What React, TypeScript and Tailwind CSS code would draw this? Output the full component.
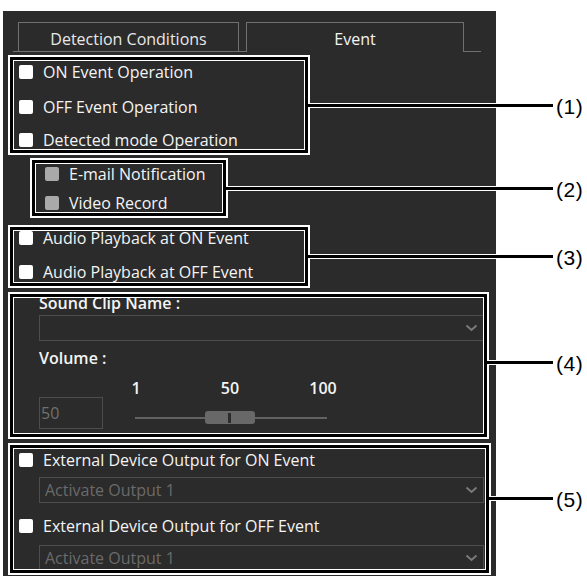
import type { ReactNode } from "react";
import clsx from "clsx";

function Check({ muted }: { muted?: boolean }) {
  return <span className={clsx("size-[14px] shrink-0 rounded-[2px]", muted ? "bg-[#a9a9a9]" : "bg-white")} />;
}

function CheckRow({ label, muted, className }: { label: string; muted?: boolean; className?: string }) {
  return (
    <div className={clsx("flex h-5 items-center gap-[10px] whitespace-nowrap", className)}>
      <Check muted={muted} />
      <span>{label}</span>
    </div>
  );
}

function Chevron() {
  return (
    <svg width="13" height="8" viewBox="0 0 13 8" className="shrink-0">
      <polyline points="1.5,1.5 6.5,6 11.5,1.5" fill="none" stroke="#7a7a7a" strokeWidth="2" />
    </svg>
  );
}

function Select({ value, className }: { value?: string; className?: string }) {
  return (
    <div
      className={clsx(
        "flex h-[26px] w-[445px] items-center justify-between border border-[#4d4d4d] pl-[5px] pr-[5px] text-[#6a6a6a]",
        className,
      )}
    >
      <span>{value}</span>
      <Chevron />
    </div>
  );
}

function Frame({
  n,
  className,
  lineClass,
  children,
}: {
  n: number;
  className: string;
  lineClass: string;
  children: ReactNode;
}) {
  return (
    <div className={clsx("relative border-[3px] border-black shadow-[0_0_0_2px_#fff]", className)}>
      <div className="h-full overflow-hidden border border-white">{children}</div>
      <div
        className={clsx(
          "absolute left-[calc(100%+3px)] z-10 h-[3px] bg-black shadow-[0_1px_0_#fff,0_-1px_0_#fff]",
          lineClass,
        )}
      >
        <span className="absolute left-full top-1/2 ml-[3px] -translate-y-1/2 font-['Liberation_Sans',Arial,sans-serif] text-[21px] leading-none tracking-[0.5px] text-black">
          ({n})
        </span>
      </div>
    </div>
  );
}

export default function App() {
  return (
    <div className="relative h-[576px] w-[587px] overflow-hidden bg-white font-['Open_Sans',sans-serif] text-[16px] font-medium text-[#f4f4f4]">
      <div className="ml-[3px] mt-[11px] h-[565px] w-[493px] bg-[#2b2b2b] pt-[11px]">
        {/* tabs */}
        <div className="ml-[10px] flex h-[30px] items-end">
          <div className="w-[5px] border-b border-[#707070]" />
          <div className="flex h-[30px] w-[221px] justify-center border border-[#707070] pt-[6px] leading-5 text-[#e8e8e8]">
            Detection Conditions
          </div>
          <div className="w-[7px] border-b border-[#707070]" />
          <div className="flex h-[30px] w-[218px] justify-center border-x border-t border-[#707070] pt-[6px] leading-5">
            Event
          </div>
          <div className="w-[17px] border-b border-[#707070]" />
        </div>

        <Frame n={1} className="ml-[7px] mt-[5px] h-[96px] w-[298px]" lineClass="top-[44px] w-[245px]">
          <div className="flex flex-col pl-[5px] pt-[1px]">
            <CheckRow label="ON Event Operation" />
            <CheckRow label="OFF Event Operation" className="mt-[15px]" />
            <CheckRow label="Detected mode Operation" className="mt-[13px]" />
          </div>
        </Frame>

        <Frame n={2} className="ml-[29px] mt-[7px] h-[56px] w-[194px]" lineClass="top-[24px] w-[327px]">
          <div className="flex flex-col gap-[9px] pl-[9px]">
            <CheckRow label="E-mail Notification" muted />
            <CheckRow label="Video Record" muted />
          </div>
        </Frame>

        <Frame n={3} className="ml-[7px] mt-[11px] h-[59px] w-[298px]" lineClass="top-[25px] w-[245px]">
          <div className="-mt-[3px] flex flex-col gap-[14px] pl-[5px]">
            <CheckRow label="Audio Playback at ON Event" />
            <CheckRow label="Audio Playback at OFF Event" />
          </div>
        </Frame>

        <Frame n={4} className="ml-[7px] mt-[8px] h-[143px] w-[477px]" lineClass="top-[64px] w-[66px]">
          <div className="-mt-[5px] pl-[25px]">
            <div className="h-5 font-semibold leading-5">Sound Clip Name :</div>
            <Select className="mt-[2px]" />
            <div className="mt-[7px] h-5 font-semibold leading-5">Volume :</div>
            <div className="mt-[12px] flex h-[17px] items-center font-semibold leading-[17px]">
              <span className="ml-[77px] w-[40px] text-center">1</span>
              <span className="ml-[54px] w-[40px] text-center">50</span>
              <span className="ml-[53px] w-[40px] text-center">100</span>
            </div>
            <div className="flex items-start">
              <div className="flex h-[32px] w-[64px] items-center border border-[#4d4d4d] pl-[1px] text-[#707070]">
                50
              </div>
              <div className="ml-[32px] mt-[14px] flex w-[192px] items-center">
                <div className="h-[2px] w-[70px] bg-[#626262]" />
                <div className="flex h-[13px] w-[50px] items-center rounded-[3px] bg-[#686868] pl-[23px]">
                  <div className="h-[10px] w-[3px] bg-[#2b2b2b]" />
                </div>
                <div className="h-[2px] w-[72px] bg-[#626262]" />
              </div>
            </div>
          </div>
        </Frame>

        <Frame n={5} className="ml-[7px] mt-[8px] h-[128px] w-[479px]" lineClass="top-[49px] w-[64px]">
          <div className="pt-[1px]">
            <div className="pl-[5px]">
              <CheckRow label="External Device Output for ON Event" />
            </div>
            <Select value="Activate Output 1" className="ml-[25px] mt-[7px]" />
            <div className="mt-[13px] pl-[5px]">
              <CheckRow label="External Device Output for OFF Event" />
            </div>
            <Select value="Activate Output 1" className="ml-[25px] mt-[9px]" />
          </div>
        </Frame>
      </div>
    </div>
  );
}
